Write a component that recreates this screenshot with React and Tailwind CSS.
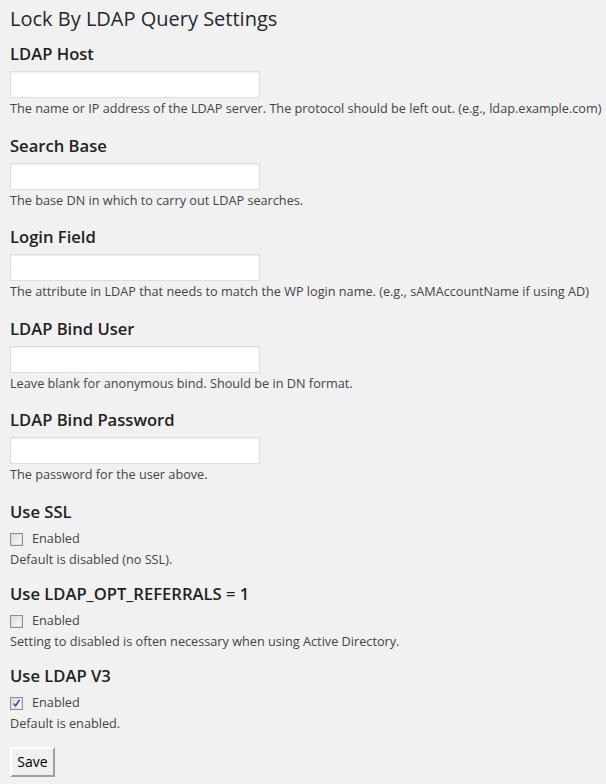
import { useState } from "react";

const textFields = [
  { label: "LDAP Host", desc: "The name or IP address of the LDAP server. The protocol should be left out. (e.g., ldap.example.com)" },
  { label: "Search Base", desc: "The base DN in which to carry out LDAP searches." },
  { label: "Login Field", desc: "The attribute in LDAP that needs to match the WP login name. (e.g., sAMAccountName if using AD)" },
  { label: "LDAP Bind User", desc: "Leave blank for anonymous bind. Should be in DN format." },
  { label: "LDAP Bind Password", desc: "The password for the user above.", type: "password" },
];

const checkFields = [
  { key: "ssl", label: "Use SSL", desc: "Default is disabled (no SSL)." },
  { key: "referrals", label: "Use LDAP_OPT_REFERRALS = 1", desc: "Setting to disabled is often necessary when using Active Directory." },
  { key: "v3", label: "Use LDAP V3", desc: "Default is enabled." },
];

function Checkbox({ checked, onChange }) {
  return (
    <span
      onClick={onChange}
      className="w-[13px] h-[13px] border border-[#8e8f8f] bg-white flex items-center justify-center cursor-pointer"
    >
      <span className="w-[11px] h-[11px] border border-[#e0e0e0] bg-gradient-to-br from-[#dcdcdc] to-[#fbfbfb] flex items-center justify-center">
        {checked && (
          <svg width="9" height="9" viewBox="0 0 9 9">
            <path d="M1.5 4.5 L3.5 7 L7.5 1" fill="none" stroke="#3a4fb8" strokeWidth="1.6" />
          </svg>
        )}
      </span>
    </span>
  );
}

export default function App() {
  const [values, setValues] = useState({});
  const [checks, setChecks] = useState({ ssl: false, referrals: false, v3: true });

  return (
    <div className="min-h-screen bg-[#f1f1f1] pl-[10px] pt-[5px] text-[#444] font-['Open_Sans',sans-serif]">
      <h1 className="text-[20px] leading-[28px] font-normal text-[#23282d]">Lock By LDAP Query Settings</h1>

      {textFields.map((f, i) => (
        <div key={i} className={i === 0 ? "mt-[9px]" : "mt-[15.5px]"}>
          <h3 className="text-[16.6px] leading-[24px] font-semibold text-[#222]">{f.label}</h3>
          <input
            type={f.type || "text"}
            value={values[i] || ""}
            onChange={e => setValues({ ...values, [i]: e.target.value })}
            className="block mt-[5px] w-[250px] h-[27px] bg-white border border-[#ddd] shadow-[inset_0_1px_2px_rgba(0,0,0,0.07)] outline-none px-1 text-[13px]"
          />
          <p className="text-[12.7px] leading-[20px] whitespace-nowrap">{f.desc}</p>
        </div>
      ))}

      {checkFields.map((f, i) => (
        <div key={f.key} className={i === 0 ? "mt-[15.5px]" : "mt-[13px]"}>
          <h3 className="text-[16.6px] leading-[24px] font-semibold text-[#222]">{f.label}</h3>
          <label className="mt-[6px] flex items-center gap-[9px] h-[19px] text-[12.7px]">
            <Checkbox checked={checks[f.key]} onChange={() => setChecks({ ...checks, [f.key]: !checks[f.key] })} />
            <span>Enabled</span>
          </label>
          <p className="text-[12.7px] leading-[20px] whitespace-nowrap">{f.desc}</p>
        </div>
      ))}

      <button className="mt-[14px] w-[45px] h-[30px] bg-[#f0f0f0] border-2 border-t-white border-l-white border-r-[#a0a0a0] border-b-[#a0a0a0] text-[14px] text-black font-['Open_Sans',sans-serif]">
        Save
      </button>
    </div>
  );
}
